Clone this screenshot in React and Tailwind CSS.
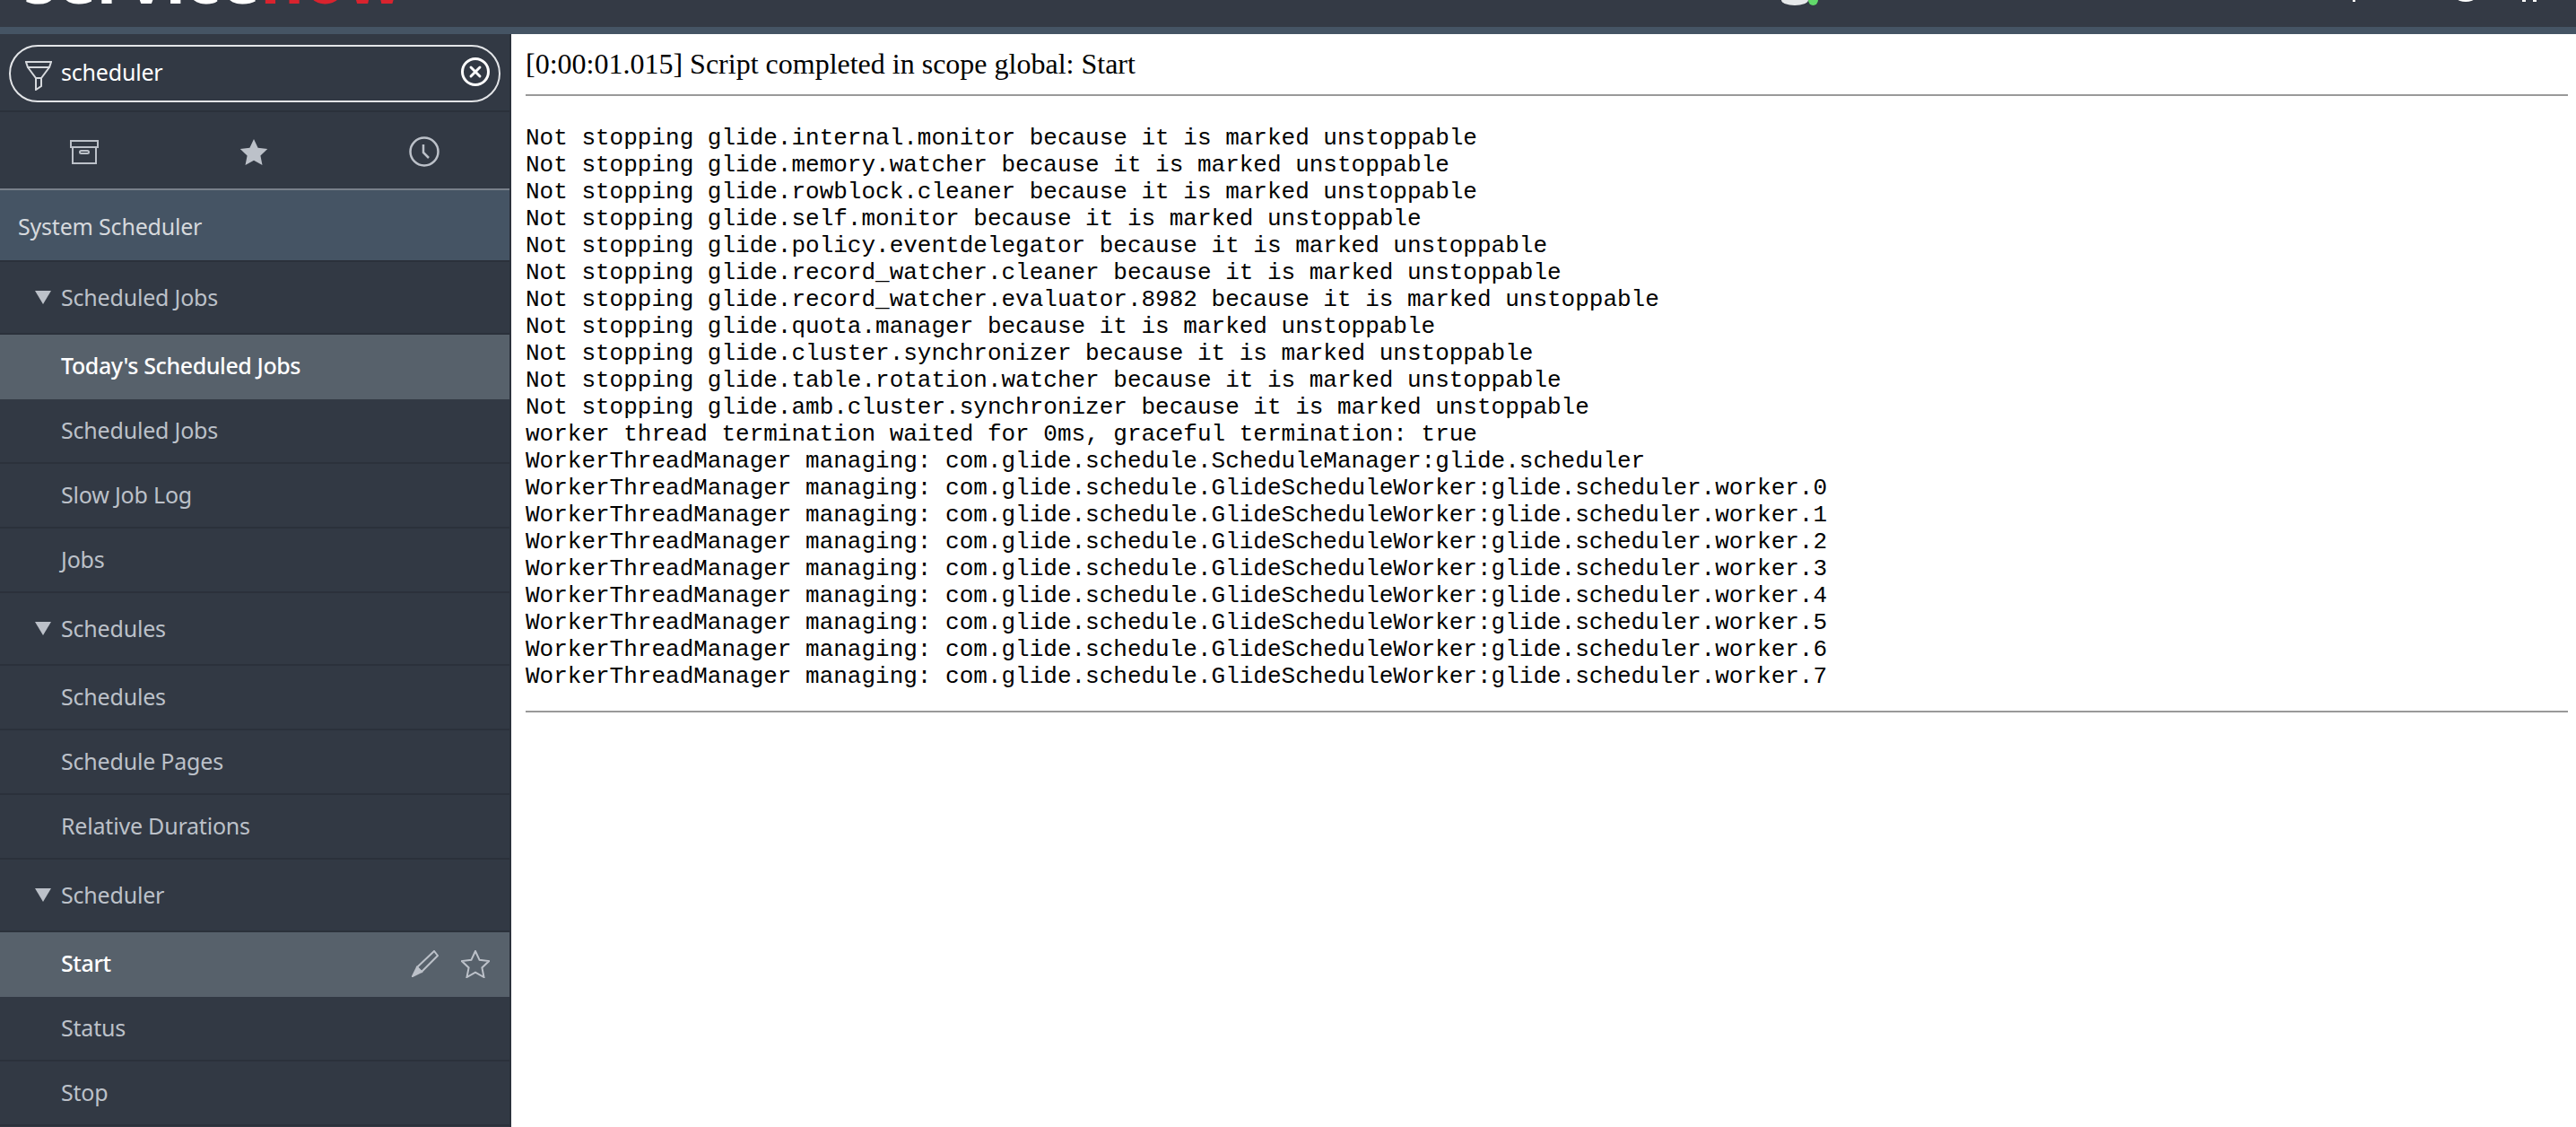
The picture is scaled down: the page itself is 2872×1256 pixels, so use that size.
import React from "react";
import { X } from "lucide-react";

const logLines = [
  "Not stopping glide.internal.monitor because it is marked unstoppable",
  "Not stopping glide.memory.watcher because it is marked unstoppable",
  "Not stopping glide.rowblock.cleaner because it is marked unstoppable",
  "Not stopping glide.self.monitor because it is marked unstoppable",
  "Not stopping glide.policy.eventdelegator because it is marked unstoppable",
  "Not stopping glide.record_watcher.cleaner because it is marked unstoppable",
  "Not stopping glide.record_watcher.evaluator.8982 because it is marked unstoppable",
  "Not stopping glide.quota.manager because it is marked unstoppable",
  "Not stopping glide.cluster.synchronizer because it is marked unstoppable",
  "Not stopping glide.table.rotation.watcher because it is marked unstoppable",
  "Not stopping glide.amb.cluster.synchronizer because it is marked unstoppable",
  "worker thread termination waited for 0ms, graceful termination: true",
  "WorkerThreadManager managing: com.glide.schedule.ScheduleManager:glide.scheduler",
  "WorkerThreadManager managing: com.glide.schedule.GlideScheduleWorker:glide.scheduler.worker.0",
  "WorkerThreadManager managing: com.glide.schedule.GlideScheduleWorker:glide.scheduler.worker.1",
  "WorkerThreadManager managing: com.glide.schedule.GlideScheduleWorker:glide.scheduler.worker.2",
  "WorkerThreadManager managing: com.glide.schedule.GlideScheduleWorker:glide.scheduler.worker.3",
  "WorkerThreadManager managing: com.glide.schedule.GlideScheduleWorker:glide.scheduler.worker.4",
  "WorkerThreadManager managing: com.glide.schedule.GlideScheduleWorker:glide.scheduler.worker.5",
  "WorkerThreadManager managing: com.glide.schedule.GlideScheduleWorker:glide.scheduler.worker.6",
  "WorkerThreadManager managing: com.glide.schedule.GlideScheduleWorker:glide.scheduler.worker.7",
];

const STAR = "M16 1l4.6 9.8 10.6 1.3-7.8 7.3 2.1 10.6L16 24.7 6.5 30l2.1-10.6L.8 12.1l10.6-1.3z";

function Group({ label }) {
  return (
    <div className="h-[81px] flex items-center border-b-2 border-[#2b313b] pl-[39px] text-[#bcc1c9]">
      <span className="w-[18px] h-[15px] mr-[11px] bg-[#bcc1c9] [clip-path:polygon(0_0,100%_0,50%_100%)]" />
      {label}
    </div>
  );
}

function Item({ label, active, actions }) {
  return (
    <div
      className={`h-[72px] flex items-center pl-[68px] pr-[22px] border-b-2 ${
        active ? "bg-[#57616b] text-white border-[#57616b] font-medium tracking-[-0.4px]" : "text-[#bcc1c9] border-[#2b313b]"
      }`}
    >
      <span className="flex-1">{label}</span>
      {actions && (
        <div className="flex items-center gap-[25px]">
          <svg width="30" height="30" viewBox="0 0 30 30" fill="none" stroke="#bcc1c9" strokeWidth="2">
            <path d="M6 19L25 1l4 5-18 18z" />
            <path d="M6 19l5 5-10 5z" fill="#bcc1c9" />
          </svg>
          <svg width="32" height="31" viewBox="0 0 32 31" fill="none" stroke="#bcc1c9" strokeWidth="2">
            <path d={STAR} />
          </svg>
        </div>
      )}
    </div>
  );
}

export default function App() {
  return (
    <div className="h-[1256px] overflow-hidden flex flex-col bg-white">
      <header className="h-[30px] bg-[#343a45] overflow-hidden shrink-0 flex items-start">
        <div
          className="pl-[26px] -mt-[62px] text-[75px] leading-none font-bold text-white whitespace-nowrap"
          style={{ fontFamily: "'Open Sans', sans-serif" }}
        >
          service<span className="text-[#d9232e]">now</span>
        </div>
        {/* bottoms of the user and tool icons, the rest is scrolled out of view */}
        <div className="ml-auto flex items-start pr-[44px]">
          <span className="w-[30px] h-[12px] -mt-[6px] rounded-[50%] bg-[#e6e8ea]" />
          <span className="w-[11px] h-[12px] -mt-[6px] rounded-[50%] bg-[#62d96b]" />
          <span className="w-[3px] h-[2px] ml-[596px] bg-white" />
          <span className="w-[18px] h-[6px] -mt-[4px] ml-[114px] rounded-[50%] bg-white" />
          <span className="w-[4px] h-[2px] ml-[54px] bg-white" />
          <span className="w-[4px] h-[2px] ml-[8px] bg-white" />
        </div>
      </header>
      <div className="h-[8px] bg-[#455464] shrink-0" />
      <div className="flex flex-1 min-h-0">
        <aside
          className="w-[570px] shrink-0 bg-[#323944] border-r-2 border-[#2b313b] text-[25px] tracking-[-0.2px] flex flex-col"
          style={{ fontFamily: "'Noto Sans', sans-serif" }}
        >
          <div className="h-[87px] shrink-0 px-[10px] pt-[12px] border-b-2 border-[#2b313b]">
            <div className="h-[64px] rounded-full border-2 border-[#e3e5e8] flex items-center pl-[16px] pr-[10px] text-white">
              <svg width="30" height="33" viewBox="0 0 30 33" fill="none" stroke="#d6d9dd" strokeWidth="2" className="mr-[10px] mt-[4px]">
                <path d="M1 1h28l-2 6H3zM3 7l9 12h6l9-12M12 19v13l6-4v-9" />
              </svg>
              <span className="flex-1 pb-[3px]">scheduler</span>
              <span className="w-[32px] h-[32px] mb-[4px] rounded-full border-[3px] border-white flex items-center justify-center">
                <X size={20} strokeWidth={3.5} />
              </span>
            </div>
          </div>
          <div className="h-[87px] shrink-0 flex items-center justify-around pt-[3px] border-b-2 border-[#78808a]">
            <svg width="32" height="27" viewBox="0 0 32 27" fill="none" stroke="#bcc1c9" strokeWidth="2">
              <path d="M1 1h30v7H1zM3 8v18h26V8" />
              <rect x="11" y="12" width="10" height="3" rx="1.5" />
            </svg>
            <svg width="32" height="31" viewBox="0 0 32 31" fill="#bcc1c9">
              <path d={STAR} />
            </svg>
            <svg width="34" height="34" viewBox="0 0 34 34" fill="none" stroke="#bcc1c9" strokeWidth="2.5">
              <circle cx="17" cy="17" r="15.5" />
              <path d="M16 9v9l6 6" />
            </svg>
          </div>
          <div className="h-[80px] shrink-0 flex items-center pl-[20px] pt-[3px] bg-[#455464] border-b-2 border-[#2b313b] text-[#d6d9dd]">
            System Scheduler
          </div>
          <Group label="Scheduled Jobs" />
          <Item label="Today's Scheduled Jobs" active />
          <Item label="Scheduled Jobs" />
          <Item label="Slow Job Log" />
          <Item label="Jobs" />
          <Group label="Schedules" />
          <Item label="Schedules" />
          <Item label="Schedule Pages" />
          <Item label="Relative Durations" />
          <Group label="Scheduler" />
          <Item label="Start" active actions />
          <Item label="Status" />
          <Item label="Stop" />
        </aside>
        <main className="flex-1 min-w-0 pl-[16px] pr-[9px] text-black">
          <h1 className="text-[32px] leading-[36px] mt-[15px]" style={{ fontFamily: "'Liberation Serif', serif" }}>
            [0:00:01.015] Script completed in scope global: Start
          </h1>
          <hr className="mt-[16px] h-[2px] bg-[#999] border-0" />
          <pre className="mt-[32px] text-[26px] leading-[30px]" style={{ fontFamily: "'Liberation Mono', monospace" }}>
            {logLines.join("\n")}
          </pre>
          <hr className="mt-[23px] h-[2px] bg-[#999] border-0" />
        </main>
      </div>
    </div>
  );
}
